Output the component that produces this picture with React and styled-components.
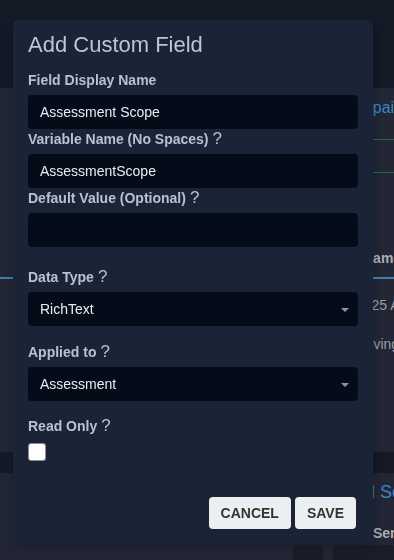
import React from "react";
import styled, { createGlobalStyle } from "styled-components";

const GlobalStyle = createGlobalStyle`
  html, body {
    margin: 0;
    padding: 0;
  }
  body {
    background: #232635;
    font-family: "Liberation Sans", Arial, sans-serif;
  }
  * {
    box-sizing: border-box;
  }
`;

// ---- page behind the dialog ----
const Page = styled.div`
  width: 394px;
  height: 560px;
  overflow: hidden;
  background: #232635;
`;

const TopBar = styled.div`
  height: 88px;
  background: #141a26;
`;

const Band = styled.div`
  display: grid;
  grid-template-columns: 320px 1fr;
  height: ${(p) => p.$h}px;
`;

const Aside = styled.div`
  grid-column: 2;
  display: flex;
  flex-direction: column;
  overflow: hidden;
  white-space: nowrap;
`;

const tones = {
  link: { color: "#3a86cc", size: 16, weight: 400, lh: 20 },
  title: { color: "#3a86cc", size: 18, weight: 400, lh: 22 },
  head: { color: "#a9b0b9", size: 14, weight: 700, lh: 20 },
  cell: { color: "#9aa1ab", size: 14, weight: 400, lh: 20 },
};

const AsideText = styled.div`
  margin: ${(p) => p.$top}px 0 0 ${(p) => p.$shift}px;
  color: ${(p) => tones[p.$tone].color};
  font-size: ${(p) => tones[p.$tone].size}px;
  font-weight: ${(p) => tones[p.$tone].weight};
  line-height: ${(p) => tones[p.$tone].lh}px;
`;

const GreenRule = styled.div`
  height: 1px;
  margin-top: ${(p) => p.$top}px;
  background: #1e6b4b;
`;

const BlueRule = styled.div`
  height: 2px;
  background: #3d82a9;
`;

const DarkStrip = styled.div`
  height: 21px;
  background: #151a26;
`;

const BoxRow = styled.div`
  display: flex;
  gap: 10px;
  padding-left: 293px;
  margin-top: 2px;
`;

const Box = styled.div`
  height: 20px;
  width: ${(p) => (p.$grow ? "auto" : "30px")};
  flex: ${(p) => (p.$grow ? 1 : "none")};
  background: #1a1e2a;
  border-radius: 2px;
`;

// ---- dialog ----
const Dialog = styled.div`
  position: fixed;
  left: 13px;
  top: 20px;
  width: 360px;
  padding: 12px 15px 14px;
  background: #1b2437;
  border-radius: 5px;
  box-shadow: 0 4px 14px rgba(0, 0, 0, 0.25);
`;

const Title = styled.h2`
  margin: 0 0 12px;
  font-size: 22px;
  font-weight: 300;
  line-height: 26px;
  color: #bcc6d1;
`;

const Field = styled.div`
  margin-bottom: ${(p) => p.$gap || 0}px;
`;

const Label = styled.label`
  display: block;
  height: 20px;
  margin-bottom: 5px;
  font-size: 14px;
  font-weight: 700;
  line-height: 20px;
  color: #b8c2cc;
  white-space: nowrap;
`;

const Hint = styled.span`
  margin-left: 4px;
  font-size: 17px;
  font-weight: 400;
  line-height: 0;
`;

const TextInput = styled.input`
  display: block;
  width: 100%;
  height: 34px;
  padding: 0 12px;
  border: none;
  border-radius: 4px;
  outline: none;
  background: #050c19;
  color: #e8ebef;
  font: 14px "Liberation Sans", Arial, sans-serif;
`;

const SelectWrap = styled.div`
  position: relative;

  &::after {
    content: "";
    position: absolute;
    right: 9px;
    top: 50%;
    margin-top: -1px;
    border-left: 4px solid transparent;
    border-right: 4px solid transparent;
    border-top: 4px solid #8e959e;
    pointer-events: none;
  }
`;

const Select = styled.select`
  display: block;
  width: 100%;
  height: 34px;
  padding: 0 12px;
  border: none;
  border-radius: 4px;
  outline: none;
  appearance: none;
  background: #050c19;
  color: #e8ebef;
  font: 14px "Liberation Sans", Arial, sans-serif;
`;

const Check = styled.input`
  display: block;
  appearance: none;
  width: 18px;
  height: 18px;
  margin: 7px 0 0;
  background: #fff;
  border: 1px solid #8a8f96;
  border-radius: 3px;
`;

const Footer = styled.div`
  display: flex;
  justify-content: flex-end;
  gap: 4px;
  margin-top: 36px;
  padding-right: 2px;
`;

const Button = styled.button`
  height: 32px;
  padding: 0 12px;
  border: none;
  border-radius: 4px;
  background: #eceff1;
  color: #333;
  font: 700 14px "Liberation Sans", Arial, sans-serif;
`;

const Backdrop = () => (
  <Page>
    <TopBar />
    <Band $h={189}>
      <Aside>
        <AsideText $tone="link" $top={10} $shift={19}>Campaign</AsideText>
        <GreenRule $top={21} />
        <GreenRule $top={32} />
        <AsideText $tone="head" $top={75} $shift={43}>Name</AsideText>
      </Aside>
    </Band>
    <BlueRule />
    <Band $h={173}>
      <Aside>
        <AsideText $tone="cell" $top={16} $shift={36}>2025 Assessment</AsideText>
        <AsideText $tone="cell" $top={19} $shift={34}>Moving</AsideText>
      </Aside>
    </Band>
    <DarkStrip />
    <Band $h={70}>
      <Aside>
        <AsideText $tone="title" $top={8} $shift={3}>Global Settings</AsideText>
        <AsideText $tone="head" $top={20} $shift={53}>Server</AsideText>
      </Aside>
    </Band>
    <BoxRow>
      <Box />
      <Box $grow />
    </BoxRow>
  </Page>
);

const App = () => {
  return (
    <>
      <GlobalStyle />
      <Backdrop />
      <Dialog>
        <Title>Add Custom Field</Title>
        <Field>
          <Label>Field Display Name</Label>
          <TextInput defaultValue="Assessment Scope" />
        </Field>
        <Field>
          <Label>
            Variable Name (No Spaces)<Hint>?</Hint>
          </Label>
          <TextInput defaultValue="AssessmentScope" />
        </Field>
        <Field $gap={20}>
          <Label>
            Default Value (Optional)<Hint>?</Hint>
          </Label>
          <TextInput defaultValue="" />
        </Field>
        <Field $gap={16}>
          <Label>
            Data Type<Hint>?</Hint>
          </Label>
          <SelectWrap>
            <Select defaultValue="RichText">
              <option>RichText</option>
              <option>Text</option>
              <option>Number</option>
            </Select>
          </SelectWrap>
        </Field>
        <Field $gap={15}>
          <Label>
            Applied to<Hint>?</Hint>
          </Label>
          <SelectWrap>
            <Select defaultValue="Assessment">
              <option>Assessment</option>
              <option>Finding</option>
            </Select>
          </SelectWrap>
        </Field>
        <Field>
          <Label>
            Read Only<Hint>?</Hint>
          </Label>
          <Check type="checkbox" />
        </Field>
        <Footer>
          <Button>CANCEL</Button>
          <Button>SAVE</Button>
        </Footer>
      </Dialog>
    </>
  );
};

export default App;
